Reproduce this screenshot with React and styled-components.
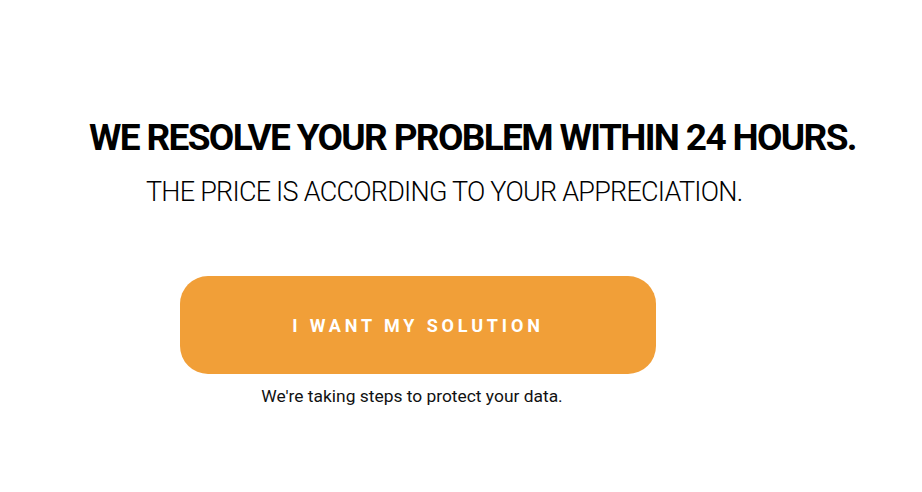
import React from "react";
import styled, { createGlobalStyle } from "styled-components";

const Global = createGlobalStyle`
  html, body { margin: 0; padding: 0; background: #fff; }
  body { font-family: Roboto, "Liberation Sans", sans-serif; }
`;

const Page = styled.main`
  width: 922px;
  height: 492px;
  display: flex;
  flex-direction: column;
  align-items: flex-start;
  padding-top: 115px;
  box-sizing: border-box;
`;

const Heading = styled.h1`
  margin: 0 0 0 89px;
  font-family: Roboto, sans-serif;
  font-weight: 700;
  font-size: 37px;
  line-height: 46px;
  letter-spacing: -1.65px;
  color: #000;
  white-space: nowrap;
`;

const Sub = styled.p`
  margin: 14px 0 0 146px;
  font-family: Roboto, sans-serif;
  font-weight: 300;
  font-size: 27px;
  line-height: 34px;
  letter-spacing: -0.75px;
  color: #000;
  white-space: nowrap;
`;

const CtaBlock = styled.div`
  margin: 67px 0 0 180px;
  width: 476px;
  display: flex;
  flex-direction: column;
  align-items: center;
`;

const Button = styled.button`
  width: 476px;
  height: 98px;
  border: none;
  border-radius: 28px;
  background: #f19f38;
  color: #fff;
  font-family: Roboto, sans-serif;
  font-weight: 700;
  font-size: 18px;
  letter-spacing: 3.85px;
  cursor: pointer;
  padding: 0;
`;

const Caption = styled.p`
  margin: 10px 12px 0 0;
  font-family: Roboto, sans-serif;
  font-weight: 400;
  font-size: 17.4px;
  line-height: 24px;
  color: #111;
`;

export default function App() {
  return (
    <>
      <Global />
      <Page>
        <Heading>WE RESOLVE YOUR PROBLEM WITHIN 24 HOURS.</Heading>
        <Sub>THE PRICE IS ACCORDING TO YOUR APPRECIATION.</Sub>
        <CtaBlock>
          <Button>I WANT MY SOLUTION</Button>
          <Caption>We're taking steps to protect your data.</Caption>
        </CtaBlock>
      </Page>
    </>
  );
}
